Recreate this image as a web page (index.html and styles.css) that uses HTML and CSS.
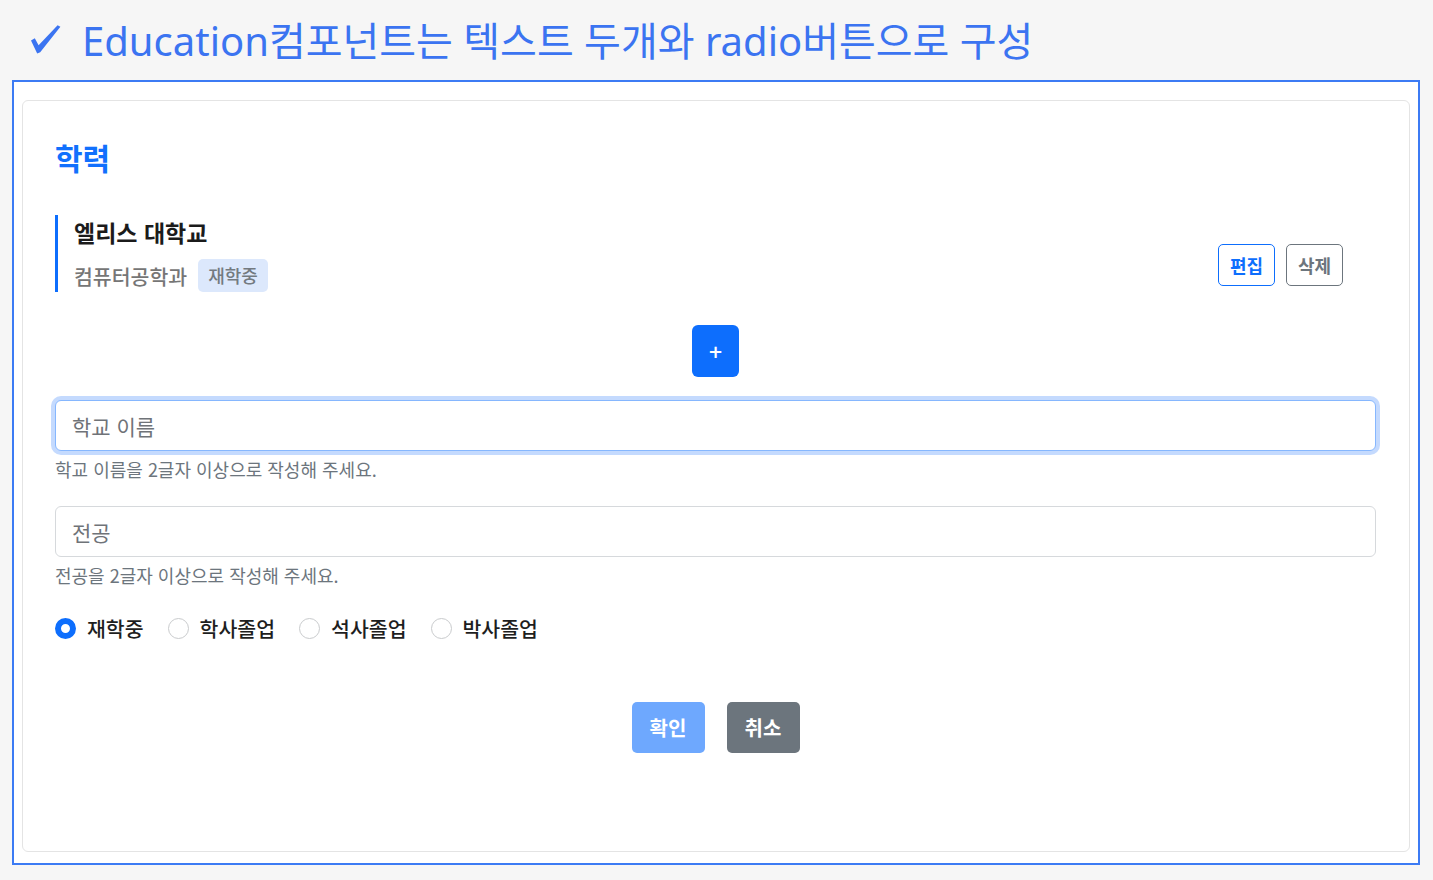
FILE: index.html
```html
<!DOCTYPE html>
<html lang="ko">
<head>
<meta charset="utf-8">
<title>Education</title>
<link rel="stylesheet" href="styles.css">
</head>
<body>
<header class="page-title">
  <svg class="check" width="32" height="32" viewBox="29 22 32 32" aria-hidden="true">
    <path d="M31 39.5 L34.8 37.2 L38.6 44.2 L57.6 24.2 L60.4 25.8 L40.2 51.2 L37.2 52.6 Z" fill="#3b74f1"/>
  </svg>
  <span class="title-text">Education컴포넌트는 텍스트 두개와 radio버튼으로 구성</span>
</header>
<main class="frame">
  <section class="card">
    <h2 class="card-title">학력</h2>
    <div class="edu-item">
      <div class="edu-info">
        <div class="edu-school">엘리스 대학교</div>
        <div class="edu-meta">
          <span class="edu-major">컴퓨터공학과</span>
          <span class="badge">재학중</span>
        </div>
      </div>
      <div class="edu-actions">
        <button class="btn-sm btn-outline-primary">편집</button>
        <button class="btn-sm btn-outline-secondary">삭제</button>
      </div>
    </div>
    <div class="add-row">
      <button class="btn-add">+</button>
    </div>
    <form class="edu-form">
      <div class="field">
        <input class="input focused" type="text" placeholder="학교 이름">
        <div class="help">학교 이름을 2글자 이상으로 작성해 주세요.</div>
      </div>
      <div class="field">
        <input class="input" type="text" placeholder="전공">
        <div class="help">전공을 2글자 이상으로 작성해 주세요.</div>
      </div>
      <div class="radios">
        <label class="radio"><input type="radio" name="status" checked><span>재학중</span></label>
        <label class="radio"><input type="radio" name="status"><span>학사졸업</span></label>
        <label class="radio"><input type="radio" name="status"><span>석사졸업</span></label>
        <label class="radio"><input type="radio" name="status"><span>박사졸업</span></label>
      </div>
      <div class="form-actions">
        <button type="button" class="btn btn-confirm">확인</button>
        <button type="button" class="btn btn-cancel">취소</button>
      </div>
    </form>
  </section>
</main>
</body>
</html>
```

FILE: styles.css
```css
* { box-sizing: border-box; }
html, body { margin: 0; padding: 0; }
body {
  background: #f6f6f6;
  font-family: "Noto Sans", "Noto Sans CJK KR", sans-serif;
  color: #212529;
}
.page-title {
  height: 80px;
  display: flex;
  align-items: center;
  padding-left: 29px;
  color: #3b74f1;
}
.check {
  display: block;
  width: 32px;
  height: 32px;
  margin-right: 21px;
  margin-top: -2px;
}
.title-text {
  font-family: "Noto Sans", "Noto Sans CJK KR", sans-serif;
  font-size: 40px;
  line-height: 50px;
  margin-top: 2px;
}
.frame {
  margin: 0 13px 15px 12px;
  border: 2px solid #3c7bf4;
  background: #fff;
  padding: 18px 8px 11px 8px;
}
.card {
  border: 1px solid #e4e4e4;
  border-radius: 6px;
  height: 752px;
  padding: 38px 33px 0 32px;
  font-family: "Noto Sans CJK KR", "Noto Sans", sans-serif;
}
.card-title {
  margin: 0;
  font-size: 30px;
  line-height: 36px;
  font-weight: 700;
  color: #1170fd;
}
.edu-item {
  margin-top: 40px;
  display: flex;
  justify-content: space-between;
}
.edu-info {
  border-left: 3px solid #0d6efd;
  padding-left: 16px;
  height: 77px;
}
.edu-school {
  font-size: 23px;
  line-height: 34px;
  font-weight: 700;
  color: #1b1b1b;
}
.edu-meta {
  margin-top: 10px;
  display: flex;
  align-items: center;
  gap: 11px;
}
.edu-major {
  font-size: 20.5px;
  color: #767676;
  font-weight: 500;
}
.badge {
  background: #dce8fc;
  color: #737a80;
  font-size: 18px;
  line-height: 33px;
  height: 33px;
  padding: 0 10px;
  border-radius: 5px;
  font-weight: 500;
}
.edu-actions {
  align-self: flex-end;
  margin-bottom: 6px;
  margin-right: 33px;
  display: flex;
  gap: 11px;
}
.btn-sm {
  font-family: inherit;
  font-size: 18px;
  font-weight: 700;
  height: 42px;
  width: 57px;
  padding: 0;
  background: #fff;
  border-radius: 5px;
  cursor: pointer;
}
.btn-outline-primary { border: 1.5px solid #0d6efd; color: #0d6efd; }
.btn-outline-secondary { border: 1.5px solid #6c757d; color: #6c757d; }
.add-row {
  display: flex;
  justify-content: center;
  margin-top: 33px;
}
.btn-add {
  width: 47px;
  height: 52px;
  border: none;
  border-radius: 6px;
  background: #0d6efd;
  color: #fff;
  font-size: 18px;
  font-weight: 700;
  font-family: "DejaVu Sans", sans-serif;
  padding: 0;
}
.edu-form { margin-top: 23px; }
.field { margin-bottom: 24px; }
.input {
  display: block;
  width: 100%;
  height: 51px;
  border: 1px solid #d6d9dc;
  border-radius: 6px;
  padding: 0 16px;
  font-family: "Noto Sans CJK KR", sans-serif;
  font-size: 21px;
  color: #212529;
  background: #fff;
  outline: none;
}
.input::placeholder { color: #6f7378; }
.input.focused {
  border-color: #86b7fe;
  box-shadow: 0 0 0 4px #c4dafe;
}
.help {
  margin-top: 5px;
  font-size: 18px;
  line-height: 26px;
  color: #6c757d;
}
.field + .field { margin-bottom: 25px; }
.radios {
  display: flex;
  gap: 24px;
  align-items: center;
  height: 30px;
}
.radio {
  display: flex;
  align-items: center;
  gap: 11px;
  font-size: 20.5px;
  font-weight: 500;
  color: #1e1e1e;
}
.radio input {
  appearance: none;
  -webkit-appearance: none;
  margin: 0;
  width: 21px;
  height: 21px;
  border: 1px solid #c9cbcd;
  border-radius: 50%;
  background: #fff;
}
.radio input:checked {
  border: 6px solid #0d6efd;
  background: #fff;
}
.form-actions {
  margin-top: 59px;
  display: flex;
  justify-content: center;
  gap: 22px;
}
.btn {
  width: 73px;
  height: 51px;
  border: none;
  border-radius: 5px;
  color: #fff;
  font-family: inherit;
  font-size: 20px;
  font-weight: 700;
  padding: 0;
}
.btn-confirm { background: #6ea8fe; }
.btn-cancel { background: #6c757d; }
```
